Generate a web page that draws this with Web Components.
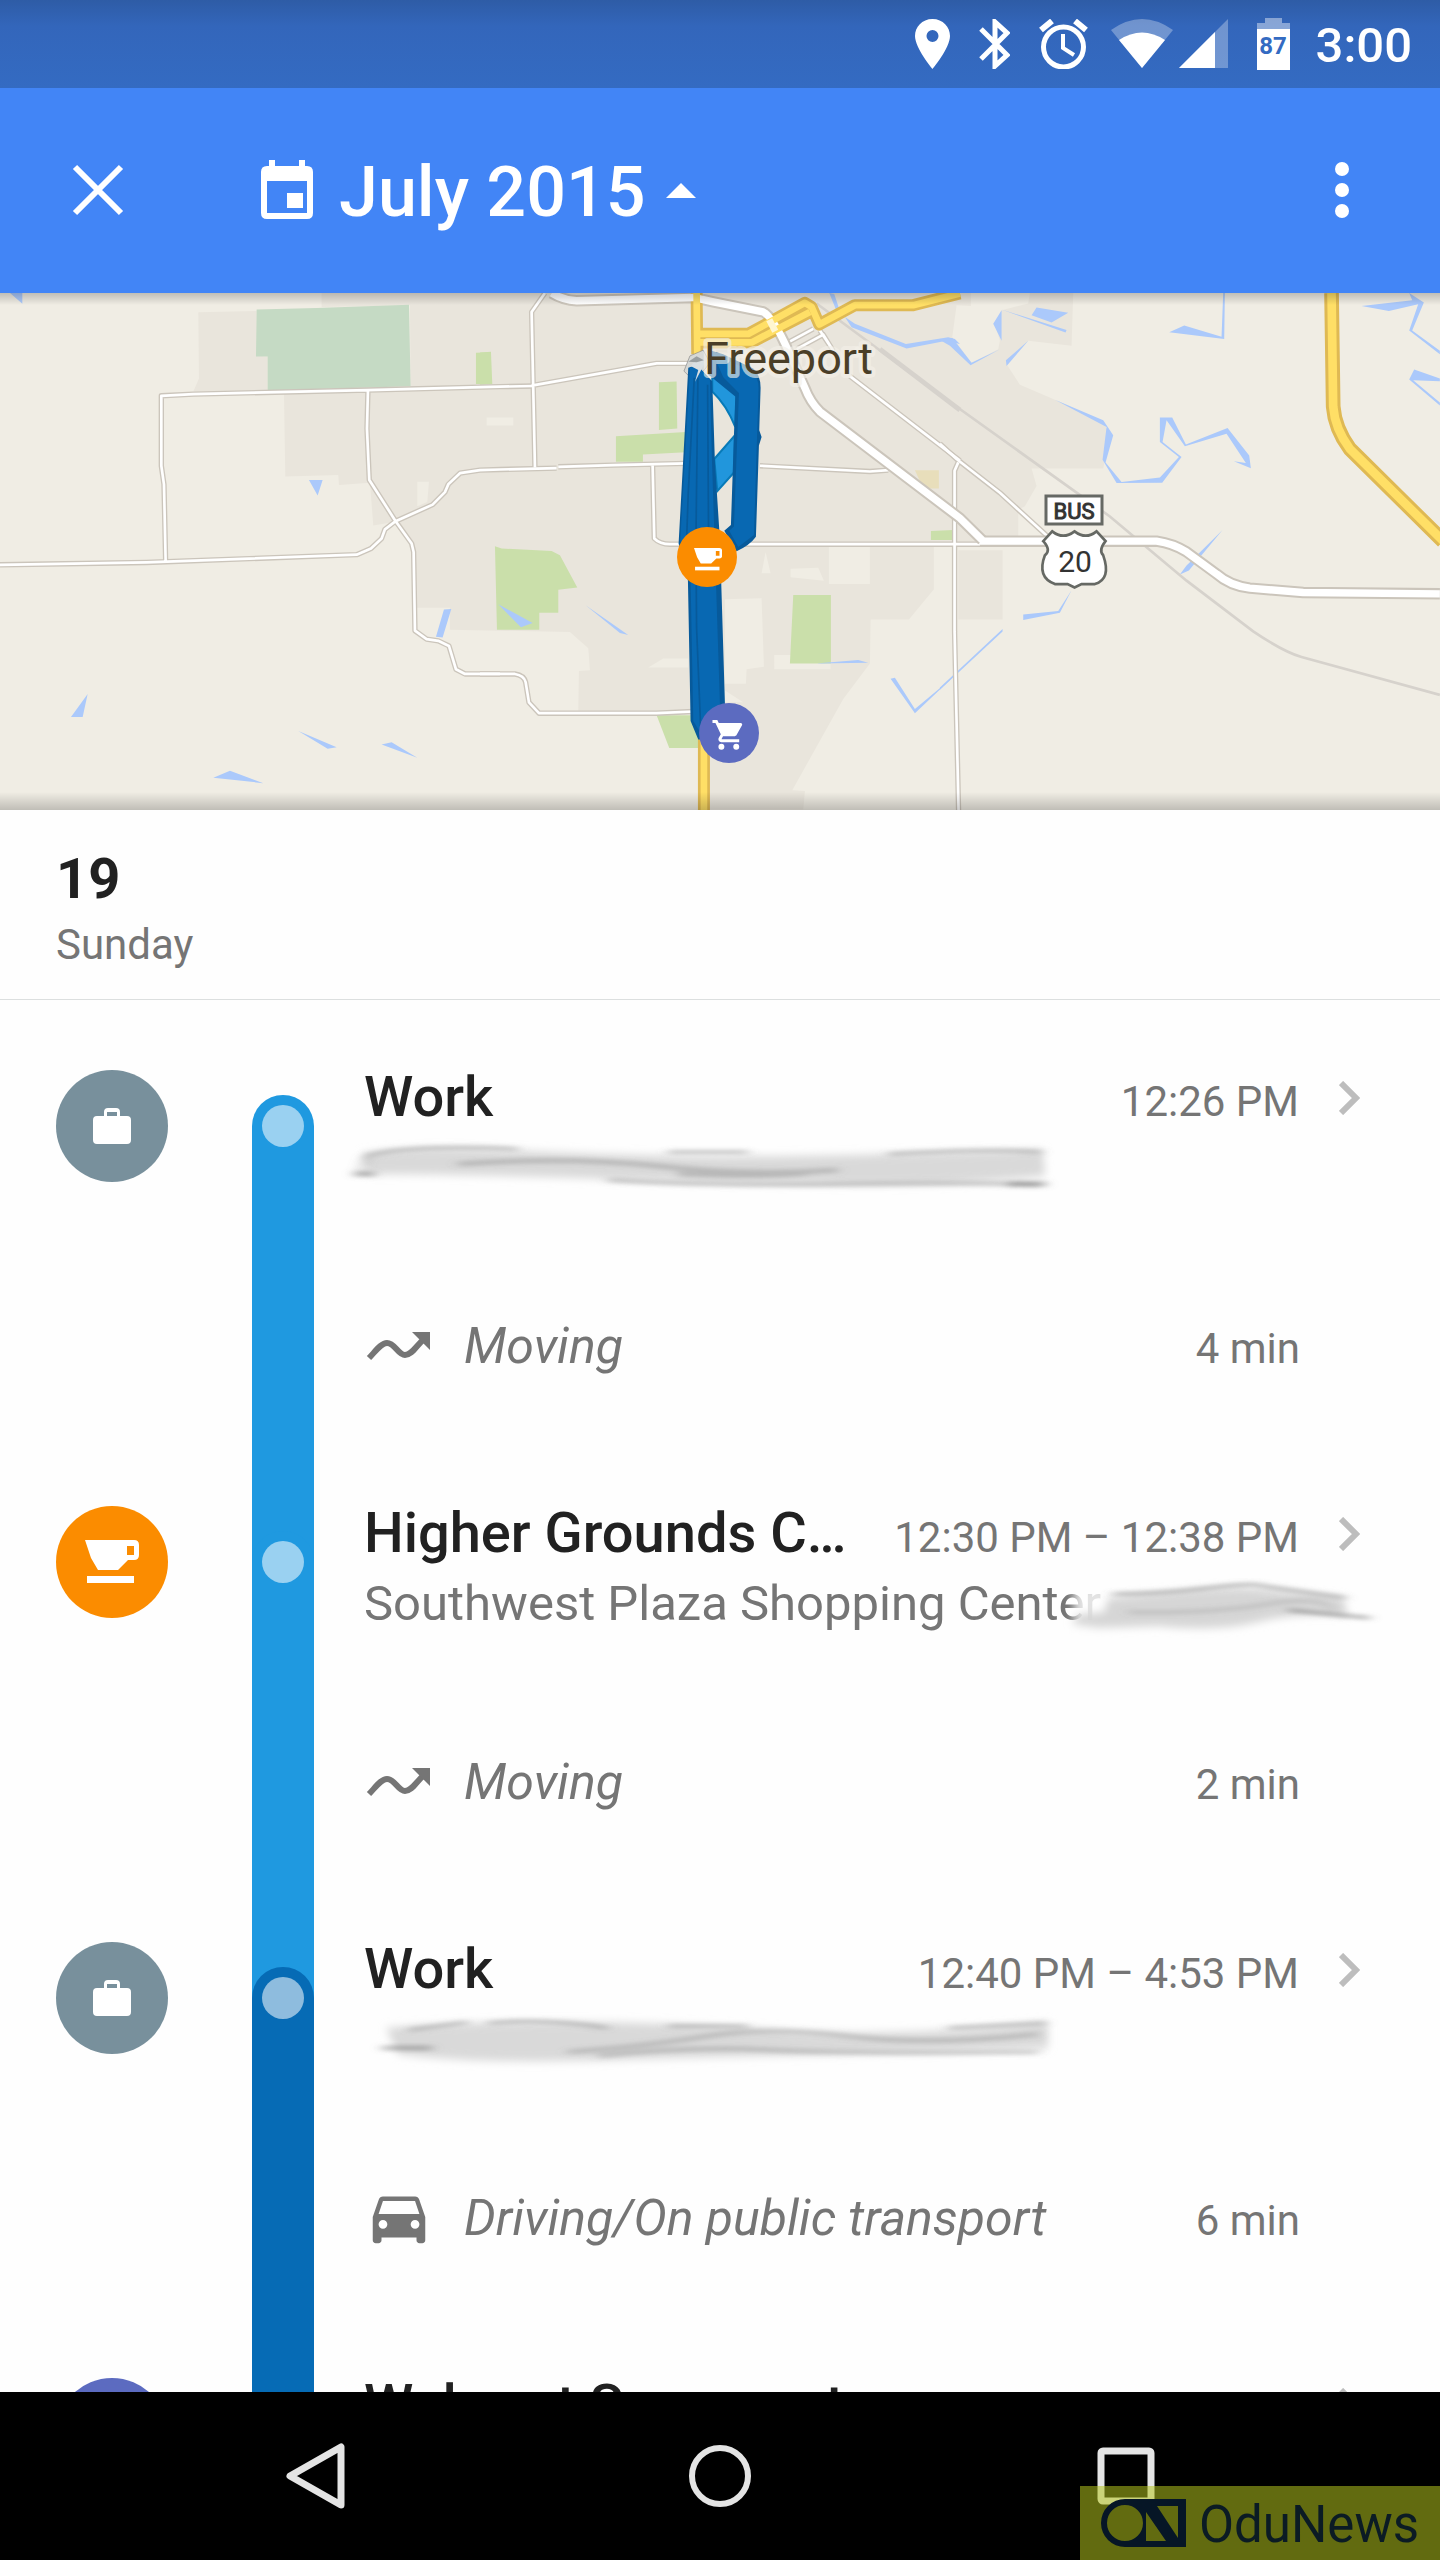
<!DOCTYPE html>
<html lang="en">
<head>
<meta charset="utf-8">
<meta name="viewport" content="width=device-width, initial-scale=1">
<title>Timeline</title>
<style>
  body { margin: 0; background: #fefefe; color: #212121; font-family: Roboto, "Liberation Sans", sans-serif; }
</style>
</head>
<body>
<timeline-app></timeline-app>

<script>
const ICONS = {
  work: `<svg width="38" height="36" viewBox="0 0 38 36" fill="#fff"><path d="M11 8V4q0-4 4-4h8q4 0 4 4v4h7q4 0 4 4v20q0 4-4 4H4q-4 0-4-4V12q0-4 4-4zm3 0h10V4H14z" fill-rule="evenodd"/></svg>`,
  cafe: `<svg width="54" height="44" viewBox="0 0 54 44" fill="#fff"><path d="M0 0h49q5 0 5 5v10q0 5-5 5h-6L33 30H13L6 18zM42 6v9h7V6z" fill-rule="evenodd"/><path d="M2 36h47v7H2z"/></svg>`,
  shop: `<svg width="66" height="66" viewBox="0 0 24 24" fill="#fff"><path d="M7 18a2 2 0 100 4 2 2 0 000-4zM1 2v2h2l3.600 7.590-1.350 2.450C4.520 15.370 5.480 17 7 17h12v-2H7.420a.25.25 0 01-.22-.37L8.100 13h7.450c.75 0 1.410-.41 1.750-1.030l3.580-6.490A1 1 0 0020 4H5.210l-.94-2H1zm16 16a2 2 0 100 4 2 2 0 000-4z"/></svg>`,
  moving: `<svg width="70" height="70" viewBox="0 0 70 70"><path d="M5 48C11 42 17 33 23 33C31 33 34 45 41 45C48 45 52 36 60 29" fill="none" stroke="#757575" stroke-width="6"/><path d="M48 22h18v18z" fill="#757575"/></svg>`,
  car: `<svg width="70" height="70" viewBox="0 0 24 24" fill="#757575"><path d="M18.920 6.010C18.720 5.420 18.160 5 17.500 5h-11c-.66 0-1.210.42-1.420 1.010L3 12v8c0 .55.45 1 1 1h1c.55 0 1-.45 1-1v-1h12v1c0 .55.45 1 1 1h1c.55 0 1-.45 1-1v-8l-2.080-5.990zM6.500 16a1.500 1.500 0 110-3 1.500 1.500 0 010 3zm11 0a1.500 1.500 0 110-3 1.500 1.500 0 010 3zM5 11l1.500-4.500h11L19 11H5z"/></svg>`
};

const define = (name, html, setup) => {
  customElements.define(name, class extends HTMLElement {
    constructor() {
      super();
      this.attachShadow({ mode: "open" });
    }
    connectedCallback() {
      this.shadowRoot.innerHTML = typeof html === "function" ? html(this) : html;
      if (setup) setup(this);
    }
  });
};

define("status-bar", `
  <style>
    :host { display: flex; justify-content: flex-end; align-items: center; height: 88px; flex: none;
      padding-right: 28px; color: #fff; font-size: 49px; font-weight: 500; line-height: 56px;
      background: linear-gradient(#2e5ca6, #3366bb 30%, #346bc2); }
    svg { display: block; }
    span { padding-top: 4px; }
    .icons { display: flex; gap: 29px; align-items: center; margin-right: 26px; }
    .radio { display: flex; gap: 6px; margin-left: -6px; }
  </style>
  <div class="icons">
    <svg width="35" height="50" viewBox="0 0 35 50"><path d="M17.500 0C7 0 0 8 0 17c0 12 17.500 33 17.500 33S35 29 35 17C35 8 28 0 17.500 0zm0 11a6 6 0 110 12 6 6 0 010-12z" fill="#fff"/></svg>
    <svg width="31" height="50" viewBox="0 0 31 50"><path d="M2 10l26 26-12 11V3l12 11L2 40" fill="none" stroke="#fff" stroke-width="5"/></svg>
    <svg width="49" height="50" viewBox="0 0 49 50" fill="none" stroke="#fff"><circle cx="24.500" cy="28" r="20" stroke-width="5"/><path d="M24 15v14l11 7" stroke-width="4"/><path d="M2 11L13 2M36 2l11 9" stroke-width="6"/></svg>
    <div class="radio">
      <svg width="62" height="50" viewBox="0 0 62 50" fill="#fff"><path d="M0 11Q31-11 62 11L31 49z" opacity=".3"/><path d="M8 21Q31 6 54 21L31 49z"/></svg>
      <svg width="49" height="50" viewBox="0 0 49 50" fill="#fff"><path d="M0 49L49 0v49z" opacity=".3"/><path d="M0 49l36-36v36z"/></svg>
    </div>
    <svg width="33" height="52" viewBox="0 0 33 52"><path d="M8 0h17v5h8v7H0V5h8z" fill="#fff" opacity=".42"/><path d="M0 11h33v41H0z" fill="#fff"/><text x="16" y="36" font-size="24" font-weight="700" text-anchor="middle" fill="#346bc2">87</text></svg>
  </div>
  <span>3:00</span>
`);

define("app-bar", `
  <style>
    :host { display: flex; align-items: center; height: 205px; flex: none; padding: 0 70px; box-sizing: border-box;
      background: #4285f6; color: #fff; }
    button { background: none; border: 0; padding: 0; margin: 0; font: inherit; color: inherit; display: flex; align-items: center; }
    h1 { margin: 0 auto 0 133px; font-size: 70px; line-height: 84px; font-weight: 500; }
    .month span { margin: 2px 20px 0 24px; }
  </style>
  <button aria-label="Close"><svg width="56" height="56" viewBox="0 0 56 56"><path d="M5 4l46 46M51 4L5 50" stroke="#fff" stroke-width="6"/></svg></button>
  <h1><button class="month">
    <svg width="56" height="62" viewBox="0 0 56 62"><path d="M10 0h6v6h24V0h6v6h2q6 0 6 6v41q0 6-6 6H8q-6 0-6-6V12q0-6 6-6h2zM8 21v32h40V21zM28 33h16v15H28z" fill="#fff" fill-rule="evenodd"/></svg>
    <span>July 2015</span>
    <svg width="30" height="15" viewBox="0 0 30 15"><path d="M0 15L15 0l15 15z" fill="#fff"/></svg>
  </button></h1>
  <button aria-label="More options"><svg width="56" height="60" viewBox="0 0 56 60" fill="#fff"><circle cx="28" cy="8" r="7"/><circle cx="28" cy="29" r="7"/><circle cx="28" cy="50" r="7"/></svg></button>
`);

define("route-map", `
  <style>
    :host { display: block; position: relative; flex: none; background: #f0ede4; }
    :host > svg, .map { display: block; width: 100%; height: auto; }
    :host::after { content: ""; position: absolute; inset: 0; pointer-events: none;
      background: linear-gradient(rgba(0,0,0,.2), transparent 12px, transparent calc(100% - 18px), rgba(0,0,0,.2)); }
    text { font-family: Roboto, "Liberation Sans", sans-serif; }
  </style>
  <svg class="map" viewBox="0 0 1440 517" role="img" aria-label="Map of Freeport">
    <defs>
      <g id="minor">
        <path d="M0 813L440 806 1070 783 1113 765 1145 735 1155 708 1187 684 1298 635 1335 598 1345 575 1380 542 1440 533 1500 531 1670 527M1187 684L1108 562 1101 410 1104 296M497 803L492 575 484 520V313L580 308 1104 296 1500 286 1600 284M1187 684L1235 750 1241 775 1245 1008 1280 1033 1315 1038 1347 1053 1368 1122 1395 1136H1500"/>
        <g transform="translate(1440)"><path d="M235 523L400 518 620 513M840 520L1170 537 1225 533M165 525L155 65 195 9M155 283L530 217H640M518 518L523 735Q540 752 570 752H1600M0 1136H105Q132 1140 137 1160L147 1220 177 1252H530L640 1247M1110 255L1440 505M925 155L1000 115M950 175L1030 132 1060 180M1020 120L1060 180"/></g>
        <g transform="translate(2820)"><path d="M0 455L50 500 180 600 330 735M55 510L44 535V1010L56 1540"/></g>
      </g>
      <g id="major">
        <path transform="translate(1440)" d="M215 9Q250 30 290 32L640 22 700 35 850 65Q880 80 925 180L975 290Q990 330 1020 360L1240 525 1440 675 1507 740"/>
        <path transform="translate(2820)" d="M120 743H650Q700 750 740 775L830 840Q870 875 930 882L1090 895 1500 899"/>
      </g>
      <g id="yellow">
        <path transform="translate(1440)" d="M650 9L652 190M655 130H805L975 38 995 50 1018 102 1125 45H1300L1440 10M655 155H815L990 65M672 1300V1540" stroke-linejoin="round"/>
      </g>
    </defs>
    <g transform="matrix(.3333 0 0 .338 0 -3)">
      <path fill="#e9e5dc" d="M595 66L770 62V195L803 197V300H580L597 262zM965 9V50L1230 45 1232 290 852 305 856 552 1015 547 1017 577 1110 570 1120 697 1190 685 1235 750 1250 940H1350V1005L1500 1008 1710 1012 1765 1060 1770 1125 1737 1127 1735 1245 2125 1250V1537H2410L2415 1482 2377 1480 2530 1210 2610 1105 2612 975H2727L2802 885V760H3055V650L3075 640 3110 580 3095 528H3310L3330 430 3310 390 3165 325 3060 280 3020 220 3085 150 3215 165 3220 9zM2875 770H3008V975H2875z"/>
      <path fill="#f0ede4" d="M2870 45L2913 47V9H3090L3085 40 3005 60 2985 100 3000 150 2995 175 2915 215 2857 140z"/>
      <path fill="#f0ede4" d="M1252 567h35l-5 60-30 13zM1460 377h80v24h-80z"/>
      <g transform="translate(1440)">
        <path fill="#f0ede4" d="M735 915L845 912 852 1115 800 1122 798 1165H735zM1047 760H1170V870H1047zM883 1080H935V1103H1052V1122H883zM932 825L1015 822 1032 860 932 850zM857 775L872 838H845zM505 1117L550 1090H625V1117zM735 1185L790 1220H735z"/>
        <path fill="#cadfaa" d="M0 185L33 183 37 278 0 280zM537 273L590 271 592 410 537 414zM408 433L617 420V480L489 487V508H408zM45 758L65 765 215 772 240 785 292 880 235 887V955H178V1005H51zM940 902H1053V1105H930zM530 1258H660V1355H568zM1353 713L1420 710V740H1353z"/>
        <path fill="#e8debb" d="M1305 533H1377V587H1330z"/>
      </g>
      <path fill="#c5dac4" d="M770 58L950 53 1227 44 1232 285 803 297V197H768z"/>
      <path fill="#cadfaa" d="M1428 186L1473 184V278H1428z"/>
      <g fill="#abc9fb">
        <path d="M30 9h37v32zM927 562h41l-15 46zM1332 945l22-1-26 84-20-2zM263 1195l-15 68h-35zM895 1305l115 48-27 4zM1145 1345l30-7 77 46zM640 1443l50-21 100 37z"/>
        <path transform="translate(1440)" d="M55 930L158 985 123 998zM317 933L445 1021 420 1015zM1048 9L1063 12 1080 62 1070 62zM1095 80L1125 100 1278 160 1405 140 1425 145 1440 160 1400 150 1280 173 1115 110zM1008 1105L1135 1095 1165 1103zM1232 1150L1245 1147 1305 1240 1420 1145 1305 1252z"/>
        <path transform="translate(2820)" d="M0 148L20 142 38 143 95 215 180 175 92 223 30 165zM185 60V150L160 100zM185 58L380 118 377 126zM290 52L385 67 335 96 275 75zM265 150L200 225 198 208zM850 9H855L853 145 688 125 733 105 845 138zM345 325L490 385 520 430 497 510 545 568 660 555 717 494 660 450V377H697L738 457 863 408 928 490 933 527 882 507 918 512 860 425 735 462 680 385 668 450 725 494 667 570 530 571 488 502 500 405zM1265 47L1417 30 1408 9 1452 37 1417 120 1500 180V190L1408 120 1435 42 1347 62zM1423 235L1500 262V270L1420 267 1500 333V342L1408 265zM848 710L747 830 720 842 740 815zM395 888L360 955 250 976V960L355 950zM188 1003V1010L0 1183V1176z"/>
      </g>
      <g fill="none" stroke="#d6d2cc" stroke-width="8"><path d="M2450 40L2820 310 3330 670 3560 860 3760 1010Q3850 1070 3905 1086L4320 1198"/><path d="M2640 175L2880 355" stroke-width="14"/></g>
      <g fill="none" stroke-linejoin="round">
        <use href="#minor" stroke="#cbc5bb" stroke-width="16"/>
        <use href="#minor" stroke="#fff" stroke-width="8"/>
        <use href="#major" stroke="#cbc5bb" stroke-width="34"/>
        <use href="#yellow" stroke="#dfb953" stroke-width="36"/>
        <use href="#major" stroke="#fff" stroke-width="22"/>
        <use href="#yellow" stroke="#ffdf66" stroke-width="20"/>
        <path d="M2308 88L2326 122" stroke="#fff6d0" stroke-width="20"/>
        <path d="M3995 9L4000 345Q4005 410 4050 470L4330 743" stroke="#dfb953" stroke-width="44"/>
        <path d="M3995 9L4000 345Q4005 410 4050 470L4330 743" stroke="#ffdf66" stroke-width="26"/>
      </g>
      <g transform="translate(1440)">
        <path fill="#d6d8d6" stroke="#888" stroke-width="2" d="M612 240L630 195 670 178 690 215 645 272z"/>
        <path fill="#2196dc" stroke="#087ab8" stroke-width="6" d="M697 240L770 310 766 405Q740 340 697 300zM703 500L765 430 762 540 712 595z"/>
        <path fill="#075a9b" d="M690 178L730 190 820 232Q842 250 842 290L838 415 845 435 837 460 828 730Q810 755 770 773L733 712 753 695 766 315 685 250z"/>
        <path fill="#0868b2" d="M700 190L815 240Q836 258 836 290L822 725 775 760 748 712 762 700 777 305 730 258z"/>
        <path fill="#075a9b" d="M625 230L650 222 697 270 705 510 720 740 735 1225 700 1330H655L632 1275 624 860 596 750z"/>
        <path fill="#0868b2" d="M630 230L652 222 690 265 696 500 704 740 720 1225 695 1320H668L640 1275 632 860 601 740z"/>
        <path fill="none" stroke="#075a9b" stroke-width="5" d="M643 260L625 600 620 740M654 260L648 740 650 1000 662 1290M683 280L686 740"/>
        <path fill="#d9dfe2" d="M632 225L655 200 676 213 645 272 655 237z"/>
        <path fill="#9a9fa0" d="M625 212L650 196 672 208 650 214z"/>
      </g>
      <path transform="translate(2820)" d="M337 714Q370 740 404 714Q438 740 470 714L497 743Q475 770 490 785Q515 855 465 870H425L404 880 383 870H345Q290 850 315 785Q335 770 310 743z" fill="#fff" stroke="#666964" stroke-width="8"/>
    </g>
    <rect x="1046" y="203" width="56" height="28" fill="#fff" stroke="#666964" stroke-width="3"/>
    <text x="1074" y="226" font-size="22" text-anchor="middle" fill="#333" stroke="#333">BUS</text>
    <text x="1075" y="279" font-size="30" text-anchor="middle" fill="#333">20</text>
    <text x="704" y="81" font-size="45" fill="#4a3e27" stroke="#f3f0e8" stroke-opacity=".65" stroke-width="8" stroke-linejoin="round" paint-order="stroke">Freeport</text>
    <circle cx="707" cy="264" r="30" fill="#fb8c00"/>
    <g transform="translate(694 255) scale(.52)">${ICONS.cafe}</g>
    <circle cx="729" cy="440" r="30" fill="#5c6bc0"/>
    <g transform="translate(711 424) scale(.54)">${ICONS.shop}</g>
  </svg>
`);

define("day-header", `
  <style>
    :host { display: block; flex: none; padding: 37px 56px 20px; border-bottom: 1px solid #dcdfdf; }
    h2, p { margin: 0; }
    h2 { font-size: 56px; line-height: 64px; font-weight: 700; }
    p { font-size: 42px; line-height: 68px; color: #757575; }
  </style>
  <h2><slot name="date"></slot></h2>
  <p><slot></slot></p>
`);

// A visited place. "before" and "after" colour the rail above and below its dot.
define("place-row", el => `
  <style>
    :host { display: flex; height: 220px; }
    .badge { flex: none; display: flex; align-items: center; justify-content: center; width: 112px; height: 112px;
      margin: 53px 84px 0 56px; border-radius: 50%; background: ${el.getAttribute("badge")}; }
    .rail { flex: none; display: flex; width: 62px; background: ${el.getAttribute("before")}; }
    .line { flex: 1; margin-top: 78px; border-radius: 31px 31px 0 0; background: ${el.getAttribute("after")}; }
    .dot { width: 42px; height: 42px; margin: 10px; border-radius: 50%; background: rgba(255,255,255,.55); }
    .body { flex: 1; min-width: 0; padding: 48px 80px 0 50px; }
    .head { display: flex; align-items: center; gap: 40px; }
    .texts { flex: 1; min-width: 0; display: flex; align-items: baseline; gap: 40px; }
    h3 { flex: 1; margin: 0; font-size: 56px; line-height: 64px; font-weight: 500; white-space: nowrap; }
    time { font-size: 42px; line-height: 56px; color: #757575; white-space: nowrap; }
    button { display: flex; padding: 0; border: 0; background: none; }
    .sub { position: relative; font-size: 49px; line-height: 76px; color: #757575; white-space: nowrap; }
  </style>
  <div class="badge">${ICONS[el.getAttribute("icon")]}</div>
  <div class="rail"><div class="line"><div class="dot"></div></div></div>
  <div class="body">
    <div class="head">
      <div class="texts"><h3><slot name="name"></slot></h3><time><slot name="time"></slot></time></div>
      <button aria-label="Place details"><svg width="21" height="34" viewBox="0 0 21 34"><path d="M2 2l15 15L2 32" fill="none" stroke="#bdbdbd" stroke-width="6"/></svg></button>
    </div>
    <div class="sub"><slot></slot></div>
  </div>
`);

define("move-row", el => `
  <style>
    :host { display: flex; height: 216px; }
    .rail { flex: none; width: 62px; margin-left: 252px; background: ${el.getAttribute("rail")}; }
    .body { flex: 1; display: flex; align-items: center; gap: 30px; padding: 0 140px 0 50px; color: #757575; }
    svg { flex: none; }
    .texts { flex: 1; display: flex; align-items: baseline; justify-content: space-between; padding-top: 4px; }
    em { font-size: 50px; line-height: 60px; }
    span { font-size: 42px; line-height: 60px; }
  </style>
  <div class="rail"></div>
  <div class="body">${ICONS[el.getAttribute("icon")]}
    <div class="texts"><em><slot></slot></em><span><slot name="duration"></slot></span></div>
  </div>
`);

// Smeared-out street address laid over the second line of a place.
const SMEARS = {
  long: `<g filter="url(#b)"><path d="M14 16Q60 8 150 12T330 18T695 12L697 38Q600 48 480 46T230 40T20 36z" fill="#d9d9d9"/></g>
    <g filter="url(#s)" fill="none" stroke="#777"><path d="M18 18Q60 6 170 11M320 14H400M540 16Q640 10 694 14" stroke-width="4" opacity=".4"/><path d="M110 26Q220 18 310 28T490 32M330 36Q410 40 460 35M260 42Q360 48 500 46T690 47" stroke-width="5" opacity=".35"/><path d="M6 36H26M660 46h38" stroke-width="5" opacity=".6"/><path d="M18 18L12 34" stroke-width="6" opacity=".3"/></g>`,
  indented: `<g filter="url(#b)"><path d="M38 18Q120 12 220 12T430 20T700 12L700 38Q600 42 500 44T260 50T50 44z" fill="#d9d9d9"/></g>
    <g filter="url(#s)" fill="none" stroke="#777"><path d="M60 20L120 12M140 13Q200 8 260 18M320 16H400M600 18L698 13" stroke-width="4" opacity=".4"/><path d="M220 42Q300 36 360 26T500 26T690 24M250 46Q340 36 420 40T690 42" stroke-width="5" opacity=".3"/><path d="M34 38H84" stroke-width="5" opacity=".5"/></g>`,
  tail: `<g filter="url(#b)"><path d="M726 12H762V66H726z" fill="#fefefe" opacity=".8"/><path d="M760 24Q800 20 850 16T920 16L995 24 1000 42Q950 38 910 48T810 52L750 54 724 50 730 40 756 38z" fill="#d6d6d6"/></g>
    <g filter="url(#s)" fill="none" stroke="#777"><path d="M765 20Q810 20 860 14T915 12L998 24" stroke-width="4" opacity=".45"/><path d="M780 38Q860 40 920 30T985 38" stroke-width="5" opacity=".2"/><path d="M940 36L1022 44" stroke-width="3" opacity=".7"/></g>`
};

define("smear-mark", el => `
  <style>
    :host { position: absolute; left: -16px; top: 8px; }
    svg { display: block; width: 1040px; height: 72px; overflow: visible; }
  </style>
  <svg viewBox="0 0 1040 72" aria-hidden="true">
    <filter id="b" x="-5%" y="-30%" width="110%" height="160%"><feGaussianBlur stdDeviation="4"/></filter>
    <filter id="s" x="-5%" y="-30%" width="110%" height="160%"><feGaussianBlur stdDeviation="6 2"/></filter>
    ${SMEARS[el.getAttribute("kind")]}
  </svg>
`);

define("nav-bar", `
  <style>
    :host { position: relative; display: flex; align-items: center; height: 168px; flex: none; background: #000; }
    nav { display: flex; flex: 1; justify-content: center; gap: 338px; }
    button { display: flex; padding: 0; border: 0; background: none; }
    .mark { position: absolute; right: 0; bottom: 0; display: flex; align-items: center; gap: 13px; width: 360px; height: 74px;
      box-sizing: border-box; padding-left: 21px; background: rgba(182,198,30,.54); color: #0b1b24; font-size: 51px; line-height: 60px; }
    .mark span { padding-top: 4px; }
  </style>
  <nav>
    <button aria-label="Back"><svg width="68" height="68" viewBox="0 0 68 68"><path d="M10 34L61 5V63z" fill="none" stroke="#e4e4e4" stroke-width="7" stroke-linejoin="round"/></svg></button>
    <button aria-label="Home"><svg width="68" height="68" viewBox="0 0 68 68"><circle cx="34" cy="34" r="28" fill="none" stroke="#e4e4e4" stroke-width="6"/></svg></button>
    <button aria-label="Recent apps"><svg width="68" height="68" viewBox="0 0 68 68"><rect x="9" y="9" width="50" height="50" rx="2" fill="none" stroke="#e4e4e4" stroke-width="7"/></svg></button>
  </nav>
  <div class="mark">
    <svg width="85" height="48" viewBox="0 0 85 48"><path d="M24 0H85V48H24A24 24 0 0124 0zM24 6a18 18 0 100 36 18 18 0 000-36zM45 13V42H65zM56 7L77 39V7z" fill="#061626" fill-rule="evenodd"/></svg>
    <span>OduNews</span>
  </div>
`);

define("timeline-app", `
  <style>
    :host { display: flex; flex-direction: column; height: 100vh; }
    main { flex: 1; min-height: 0; padding-top: 17px; overflow-y: auto; scrollbar-width: none; }
  </style>
  <status-bar></status-bar>
  <app-bar></app-bar>
  <route-map></route-map>
  <day-header><span slot="date">19</span>Sunday</day-header>
  <main>
    <place-row icon="work" badge="#78909c" before="transparent" after="#1f99e0">
      <span slot="name">Work</span><span slot="time">12:26 PM</span><smear-mark kind="long"></smear-mark>
    </place-row>
    <move-row icon="moving" rail="#1f99e0">Moving<span slot="duration">4 min</span></move-row>
    <place-row icon="cafe" badge="#fb8c00" before="#1f99e0" after="#1f99e0">
      <span slot="name">Higher Grounds C…</span><span slot="time">12:30 PM – 12:38 PM</span>Southwest Plaza Shopping Center<smear-mark kind="tail"></smear-mark>
    </place-row>
    <move-row icon="moving" rail="#1f99e0">Moving<span slot="duration">2 min</span></move-row>
    <place-row icon="work" badge="#78909c" before="#1f99e0" after="#066bb5">
      <span slot="name">Work</span><span slot="time">12:40 PM – 4:53 PM</span><smear-mark kind="indented"></smear-mark>
    </place-row>
    <move-row icon="car" rail="#066bb5">Driving/On public transport<span slot="duration">6 min</span></move-row>
    <place-row icon="shop" badge="#5c6bc0" before="#066bb5" after="#066bb5">
      <span slot="name">Walmart Supercent…</span>
    </place-row>
  </main>
  <nav-bar></nav-bar>
`);
</script>
</body>
</html>
